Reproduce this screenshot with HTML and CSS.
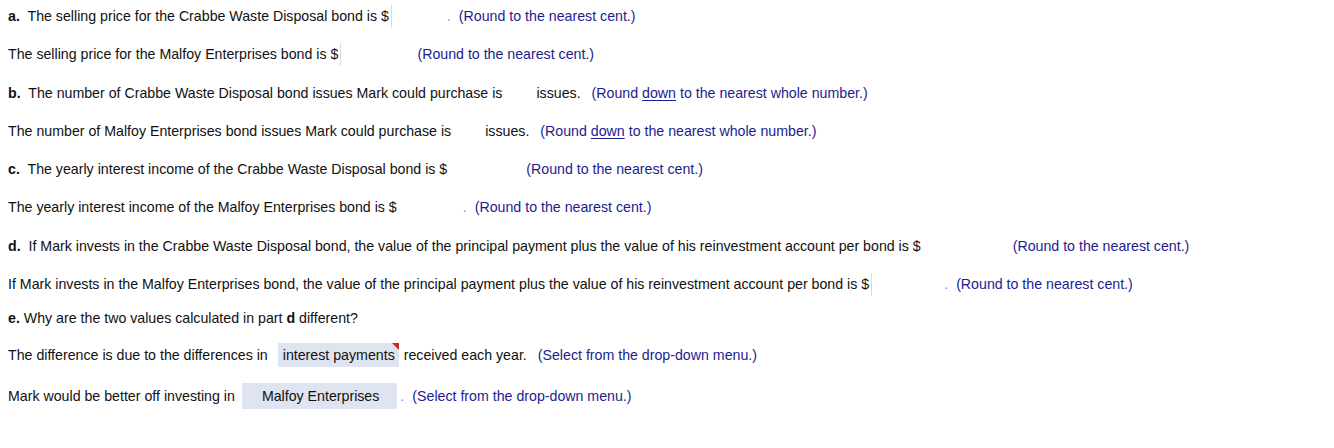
FILE: index.html
```html
<!DOCTYPE html>
<html lang="en">
<head>
    <meta charset="UTF-8">
    <title>Bond Problem</title>
    <link rel="stylesheet" href="styles.css">
</head>
<body>
    <div class="question">
        <div class="row">
            <span><b>a.</b>&nbsp; The selling price for the Crabbe Waste Disposal bond is $</span>
            <span class="answer bordered" style="width: 55px;"></span>
            <span class="dot">.</span>
            <span class="hint">(Round to the nearest cent.)</span>
        </div>
        <div class="row">
            <span>The selling price for the Malfoy Enterprises bond is $</span>
            <span class="answer bordered" style="width: 72px;"></span>
            <span class="hint">(Round to the nearest cent.)</span>
        </div>
        <div class="row">
            <span><b>b.</b>&nbsp; The number of Crabbe Waste Disposal bond issues Mark could purchase is</span>
            <span class="answer" style="width: 32px;"></span>
            <span>issues.</span>
            <span class="hint spaced">(Round <u>down</u> to the nearest whole number.)</span>
        </div>
        <div class="row">
            <span>The number of Malfoy Enterprises bond issues Mark could purchase is</span>
            <span class="answer" style="width: 32px;"></span>
            <span>issues.</span>
            <span class="hint spaced">(Round <u>down</u> to the nearest whole number.)</span>
        </div>
        <div class="row">
            <span><b>c.</b>&nbsp; The yearly interest income of the Crabbe Waste Disposal bond is $</span>
            <span class="answer" style="width: 72px;"></span>
            <span class="hint">(Round to the nearest cent.)</span>
        </div>
        <div class="row">
            <span>The yearly interest income of the Malfoy Enterprises bond is $</span>
            <span class="answer" style="width: 63px;"></span>
            <span class="dot">.</span>
            <span class="hint">(Round to the nearest cent.)</span>
        </div>
        <div class="row">
            <span><b>d.</b>&nbsp; If Mark invests in the Crabbe Waste Disposal bond, the value of the principal payment plus the value of his reinvestment account per bond is $</span>
            <span class="answer" style="width: 85px;"></span>
            <span class="hint">(Round to the nearest cent.)</span>
        </div>
        <div class="row before-e">
            <span>If Mark invests in the Malfoy Enterprises bond, the value of the principal payment plus the value of his reinvestment account per bond is $</span>
            <span class="answer bordered" style="width: 72px;"></span>
            <span class="dot">.</span>
            <span class="hint">(Round to the nearest cent.)</span>
        </div>
        <div class="row short">
            <span><b>e.</b> Why are the two values calculated in part <b>d</b> different?</span>
        </div>
        <div class="row">
            <span>The difference is due to the differences in</span>
            <span class="select flagged">interest payments</span>
            <span>received each year.</span>
            <span class="hint spaced">(Select from the drop-down menu.)</span>
        </div>
        <div class="row tall">
            <span>Mark would be better off investing in</span>
            <span class="select wide">Malfoy Enterprises</span>
            <span class="dot">.</span>
            <span class="hint">(Select from the drop-down menu.)</span>
        </div>
    </div>
</body>
</html>
```

FILE: styles.css
```css
body {
    margin: 0;
    padding: 0;
    background-color: #ffffff;
    font-family: "Liberation Sans", Arial, sans-serif;
    font-size: 14.2px;
    color: #111111;
}
.question {
    padding: 4px 8px;
    display: flex;
    flex-direction: column;
}
.row {
    display: flex;
    align-items: center;
    height: 24px;
    margin-bottom: 14.3px;
    white-space: nowrap;
}
.row.before-e {
    margin-bottom: 10px;
}
.row.short {
    margin-bottom: 13px;
}
.row.tall {
    height: 26px;
    margin-top: 2px;
}
.answer {
    display: inline-block;
    height: 23px;
    margin-left: 2px;
    box-sizing: border-box;
}
.answer.bordered {
    border-left: 1px solid #d6d9e6;
}
.dot {
    color: #8a93b8;
    margin-left: 1px;
    margin-right: 3px;
}
.hint {
    color: #1c1c8f;
    margin-left: 5px;
}
.hint.spaced {
    margin-left: 11px;
}
.hint u {
    text-decoration-thickness: 1px;
    text-underline-offset: 2px;
}
.select {
    position: relative;
    background-color: #dfe5f0;
    padding: 0 4px 0 5px;
    height: 24px;
    line-height: 24px;
    margin: 0 5px 0 10px;
}
.select.wide {
    padding: 0 18px 0 20px;
    height: 26px;
    line-height: 26px;
    margin: 0 2px 0 7px;
}
/* red corner marker */
.select.flagged::after {
    content: "";
    position: absolute;
    top: 0;
    right: 0;
    border-top: 7px solid #d42020;
    border-left: 7px solid transparent;
}
```
